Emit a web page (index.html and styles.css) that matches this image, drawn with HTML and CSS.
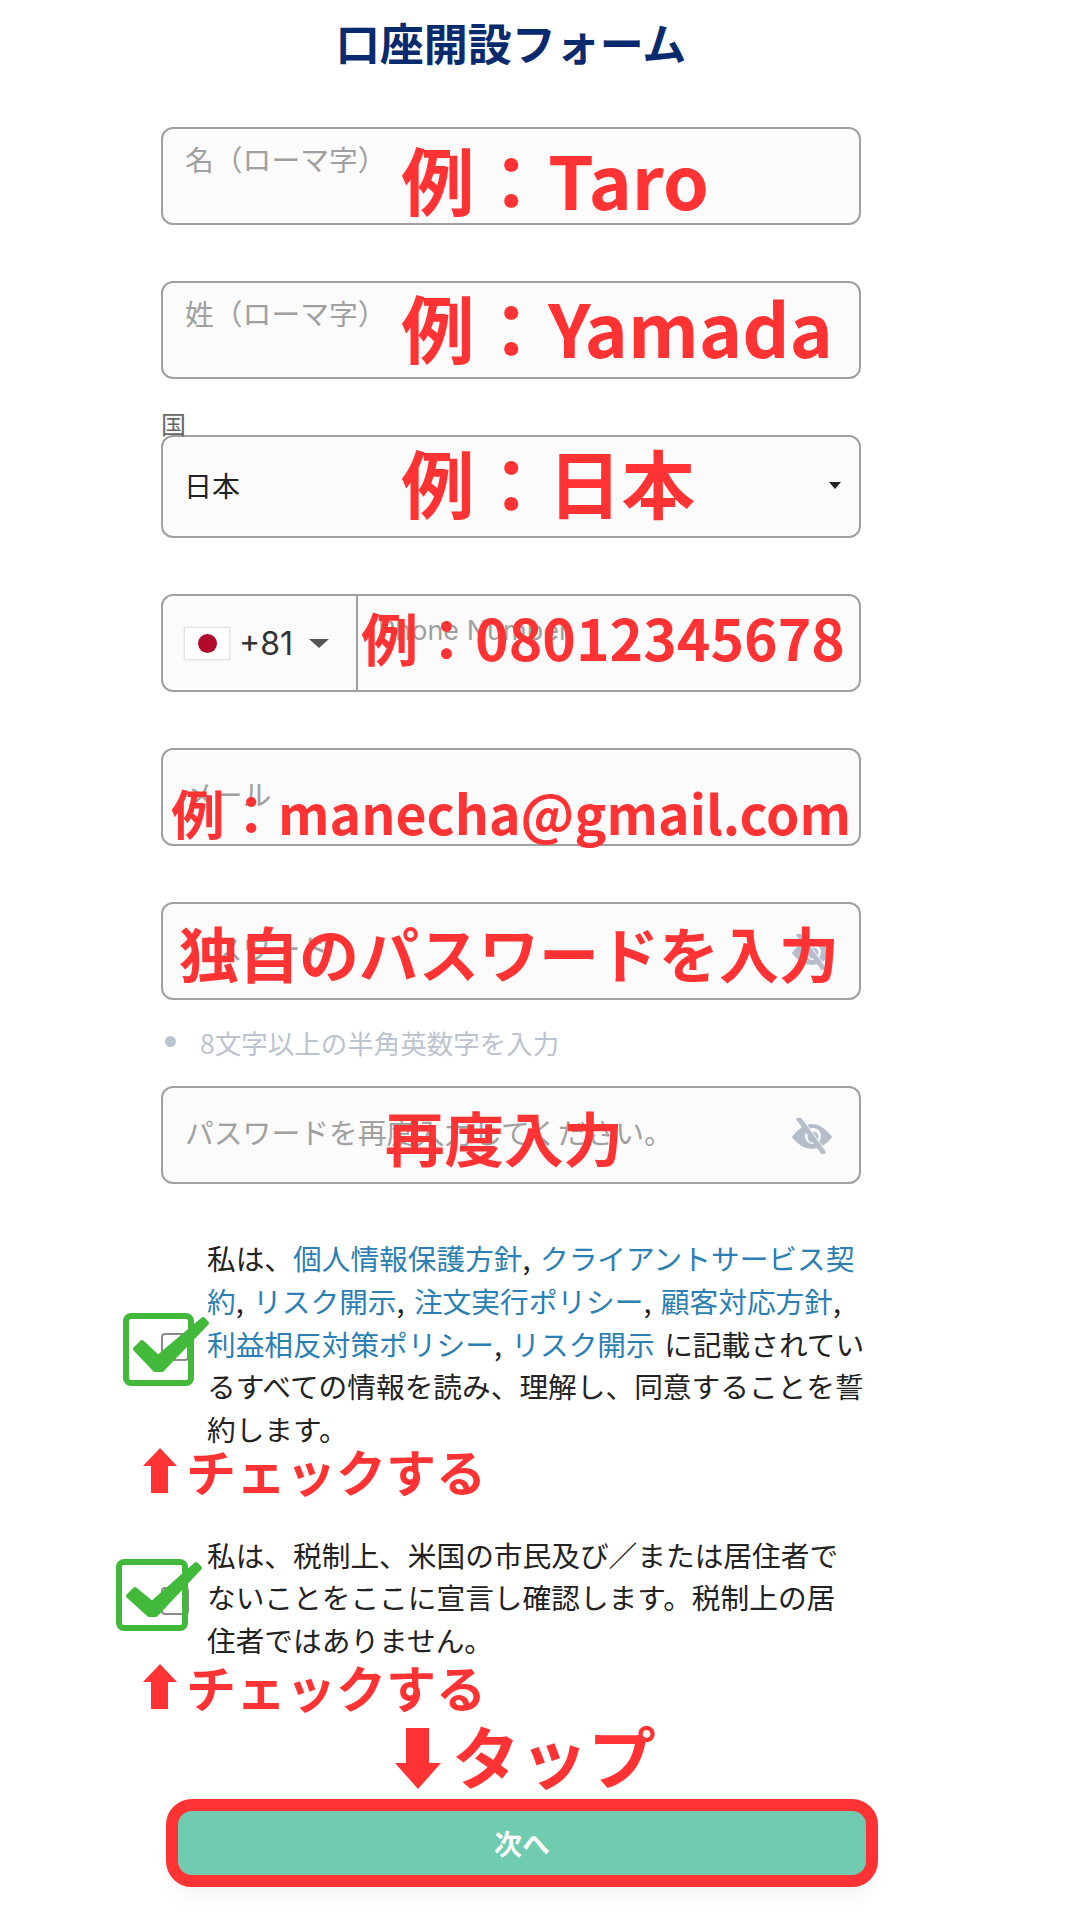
FILE: index.html
```html
<!DOCTYPE html>
<html lang="ja">

<head>
    <meta charset="UTF-8">
    <meta name="viewport" content="width=device-width, initial-scale=1.0">
    <title>口座開設フォーム</title>
    <link rel="stylesheet" href="styles.css">
</head>

<body>
    <div class="page">
        <h1 class="title">口座開設フォーム</h1>

        <form class="form">
            <input class="field" type="text" placeholder="名（ローマ字）">
            <input class="field" type="text" placeholder="姓（ローマ字）">

            <div class="country">
                <label class="country-label">国</label>
                <div class="select">
                    <span>日本</span>
                    <i class="select-caret"></i>
                </div>
            </div>

            <div class="phone">
                <div class="phone-code">
                    <span class="flag"><i></i></span>
                    <span class="dial">+81</span>
                    <i class="dial-caret"></i>
                </div>
                <input class="phone-input" type="text" placeholder="Phone Number">
            </div>

            <input class="field field-mail" type="text" placeholder="メール">

            <div class="password">
                <input class="field field-pass" type="text" placeholder="パスワード">
                <svg class="eye" viewBox="0 0 40 36">
                    <path d="M1 19C8 10 14 7 20 7C26 7 32 10 39 19C32 28 26 30 20 30C14 30 8 28 1 19Z" fill="#b5bdca" stroke="#b5bdca" stroke-width="2" stroke-linejoin="round" />
                    <circle cx="21" cy="18" r="8" fill="#fbfbfb" />
                    <circle cx="21" cy="19" r="5.5" fill="#b5bdca" />
                    <path d="M9.5 1L33.5 34" stroke="#fbfbfb" stroke-width="2.5" />
                    <path d="M7 1L31 34" stroke="#b5bdca" stroke-width="5" stroke-linecap="round" />
                </svg>
            </div>

            <p class="hint">8文字以上の半角英数字を入力</p>

            <div class="password">
                <input class="field field-pass" type="text" placeholder="パスワードを再度入力してください。">
                <svg class="eye" viewBox="0 0 40 36">
                    <path d="M1 19C8 10 14 7 20 7C26 7 32 10 39 19C32 28 26 30 20 30C14 30 8 28 1 19Z" fill="#b5bdca" stroke="#b5bdca" stroke-width="2" stroke-linejoin="round" />
                    <circle cx="21" cy="18" r="8" fill="#fbfbfb" />
                    <circle cx="21" cy="19" r="5.5" fill="#b5bdca" />
                    <path d="M9.5 1L33.5 34" stroke="#fbfbfb" stroke-width="2.5" />
                    <path d="M7 1L31 34" stroke="#b5bdca" stroke-width="5" stroke-linecap="round" />
                </svg>
            </div>

            <div class="terms terms-first">
                <input class="check" type="checkbox">
                <p>私は、<a href="#">個人情報保護方針</a>, <a href="#">クライアントサービス契約</a>, <a href="#">リスク開示</a>, <a href="#">注文実行ポリシー</a>, <a href="#">顧客対応方針</a>, <a href="#">利益相反対策ポリシー</a>, <a href="#">リスク開示</a> に記載されているすべての情報を読み、理解し、同意することを誓約します。</p>
            </div>

            <div class="terms terms-second">
                <input class="check" type="checkbox">
                <p>私は、税制上、米国の市民及び／または居住者でないことをここに宣言し確認します。税制上の居住者ではありません。</p>
            </div>

            <button class="next" type="button">次へ</button>
        </form>

        <!-- red and green notes drawn over the form -->
        <span class="note note-taro">例：Taro</span>
        <span class="note note-yamada">例：Yamada</span>
        <span class="note note-japan">例：日本</span>
        <span class="note note-phone">例：08012345678</span>
        <span class="note note-mail">例：manecha@gmail.com</span>
        <span class="note note-pass">独自のパスワードを入力</span>
        <span class="note note-again">再度入力</span>

        <svg class="mark mark-first" viewBox="0 0 90 80">
            <rect x="6" y="6" width="65" height="67" rx="5" fill="none" stroke="#43b93c" stroke-width="6" />
            <path d="M15 39L22 32L38 47L83 9L87 13L42 60L35 60Z" fill="#43b93c" stroke="#43b93c" stroke-width="4" stroke-linejoin="round" />
        </svg>
        <svg class="mark mark-second" viewBox="0 0 90 80">
            <rect x="6" y="6" width="66" height="66" rx="5" fill="none" stroke="#43b93c" stroke-width="6" />
            <path d="M15 40L22 33L39 47L83 8L87 12L43 59L36 59Z" fill="#43b93c" stroke="#43b93c" stroke-width="4" stroke-linejoin="round" />
        </svg>

        <div class="check-note check-note-first">
            <svg class="arrow-up" viewBox="0 0 34 45"><path d="M17 0L34 18H25V45H8V18H0Z" fill="#ff3333" /></svg>
            <span>チェックする</span>
        </div>
        <div class="check-note check-note-second">
            <svg class="arrow-up" viewBox="0 0 34 45"><path d="M17 0L34 18H25V45H8V18H0Z" fill="#ff3333" /></svg>
            <span>チェックする</span>
        </div>

        <div class="tap-note">
            <svg class="arrow-down" viewBox="0 0 46 61"><path d="M11 0H34V35H46L23 61L0 35H11Z" fill="#ff3333" /></svg>
            <span>タップ</span>
        </div>
        <div class="tap-frame"></div>
    </div>
</body>

</html>
```

FILE: styles.css
```css
* {
    padding: 0;
    margin: 0;
    box-sizing: border-box;
}

body {
    font-family: "Noto Sans CJK JP", "Noto Sans", sans-serif;
    background: #fff;
    color: #222;
}

.page {
    position: relative;
    width: 1080px;
    height: 1920px;
    overflow: hidden;
}

.title {
    width: 1022px;
    margin-top: 15px;
    font-size: 44px;
    line-height: 54px;
    font-weight: 700;
    text-align: center;
    color: #0a2a6e;
}

.form {
    width: 700px;
    margin: 58px 0 0 161px;
    display: flex;
    flex-direction: column;
}

.field {
    display: block;
    width: 100%;
    height: 98px;
    padding: 0 22px 36px;
    border: 2px solid #a0a0a0;
    border-radius: 12px;
    background: #fbfbfb;
    font-family: inherit;
    font-size: 28.8px;
    outline: none;
}

.field::placeholder,
.phone-input::placeholder {
    color: #a0a0a0;
    opacity: 1;
}

.field + .field {
    margin-top: 56px;
}

.field-mail {
    margin-top: 56px;
    padding: 0 22px 8px;
}

.field-pass {
    padding-bottom: 8px;
}

.country {
    margin-top: 32px;
}

.country-label {
    display: block;
    height: 24px;
    font-size: 25px;
    line-height: 24px;
    color: #666;
}

.select {
    height: 103px;
    padding: 0 18px 3px 21px;
    display: flex;
    justify-content: space-between;
    align-items: center;
    border: 2px solid #a0a0a0;
    border-radius: 12px;
    background: #fbfbfb;
    font-size: 28px;
}

.select-caret {
    border-left: 6px solid transparent;
    border-right: 6px solid transparent;
    border-top: 7px solid #222;
}

.phone {
    height: 98px;
    margin-top: 56px;
    display: flex;
    border: 2px solid #a0a0a0;
    border-radius: 12px;
    background: #fbfbfb;
}

.phone-code {
    width: 195px;
    padding-left: 21px;
    display: flex;
    align-items: center;
    border-right: 2px solid #a0a0a0;
}

.flag {
    width: 46px;
    height: 33px;
    display: flex;
    justify-content: center;
    align-items: center;
    background: #fff;
    border: 1px solid #e2e2e2;
    box-shadow: 0 0 2px rgba(0, 0, 0, .12);
}

.flag i {
    width: 19px;
    height: 19px;
    border-radius: 50%;
    background: #b20a2c;
}

.dial {
    margin-left: 9px;
    font-family: "Inter", sans-serif;
    font-size: 32px;
    color: #333;
}

.dial-caret {
    margin-left: 16px;
    border-left: 10px solid transparent;
    border-right: 10px solid transparent;
    border-top: 9px solid #555;
}

.phone-input {
    flex: 1;
    min-width: 0;
    padding: 0 20px 26px;
    border: none;
    background: transparent;
    font-family: "Inter", sans-serif;
    font-size: 27px;
    outline: none;
}

.password {
    position: relative;
    margin-top: 56px;
}

.eye {
    position: absolute;
    right: 29px;
    top: 32px;
    width: 40px;
    height: 36px;
}

.hint {
    position: relative;
    margin-top: 24px;
    padding-left: 39px;
    font-size: 26.5px;
    line-height: 38px;
    color: #bcc3d0;
}

.hint::before {
    content: '';
    position: absolute;
    left: 4px;
    top: 12px;
    width: 11px;
    height: 11px;
    border-radius: 50%;
    background: #bcc3d0;
}

.hint + .password {
    margin-top: 24px;
}

.terms {
    display: flex;
    align-items: center;
    gap: 18px;
    font-size: 28.7px;
    line-height: 42.8px;
}

.terms p {
    flex: 1;
    min-width: 0;
    word-spacing: 3px;
}

.terms a {
    color: #2c7fb3;
    text-decoration: none;
}

.terms-first {
    margin-top: 53px;
}

.terms-first p {
    margin-right: -7px;
}

.terms-second {
    margin-top: 82.6px;
}

.terms-second p {
    padding-right: 9px;
}

.check {
    flex: none;
    width: 28px;
    height: 28px;
    margin-top: 6px;
    appearance: none;
    border: 2px solid #8a8a8a;
    border-radius: 4px;
    background: #fff;
}

.next {
    position: relative;
    width: 688px;
    height: 64px;
    margin: 149px 0 0 17px;
    border: none;
    border-radius: 12px;
    background: #70cbb0;
    color: #fff;
    font-family: inherit;
    font-size: 28px;
    font-weight: 700;
    box-shadow: 0 16px 24px rgba(0, 0, 0, .08);
}

.note {
    position: absolute;
    font-weight: 700;
    line-height: 1;
    color: #ff3333;
    white-space: nowrap;
}

.note-taro {
    left: 401px;
    top: 142px;
    font-size: 73.5px;
}

.note-yamada {
    left: 401px;
    top: 290px;
    font-size: 73.5px;
}

.note-japan {
    left: 401px;
    top: 445px;
    font-size: 73.5px;
}

.note-phone {
    left: 361px;
    top: 608px;
    font-size: 57px;
}

.note-mail {
    left: 171px;
    top: 785px;
    font-size: 53.5px;
}

.note-pass {
    left: 179px;
    top: 922px;
    font-size: 60px;
}

.note-again {
    left: 385px;
    top: 1107px;
    font-size: 59.5px;
}

.mark {
    position: absolute;
    width: 90px;
    height: 80px;
}

.mark-first {
    left: 120px;
    top: 1310px;
}

.mark-second {
    left: 113px;
    top: 1556px;
}

.check-note {
    position: absolute;
    left: 143px;
    display: flex;
    align-items: center;
    gap: 9px;
    font-size: 50px;
    line-height: 1;
    font-weight: 700;
    color: #ff3333;
}

.check-note-first {
    top: 1445px;
}

.check-note-second {
    top: 1661px;
}

.arrow-up {
    width: 34px;
    height: 45px;
}

.tap-note {
    position: absolute;
    left: 395px;
    top: 1727px;
    display: flex;
    align-items: center;
    gap: 11px;
    font-size: 68px;
    line-height: 1;
    font-weight: 700;
    color: #ff3333;
}

.tap-note span {
    margin-top: -6px;
}

.arrow-down {
    width: 46px;
    height: 61px;
}

.tap-frame {
    position: absolute;
    left: 166px;
    top: 1799px;
    width: 712px;
    height: 88px;
    border: 12px solid #ff3333;
    border-radius: 26px;
}
```
